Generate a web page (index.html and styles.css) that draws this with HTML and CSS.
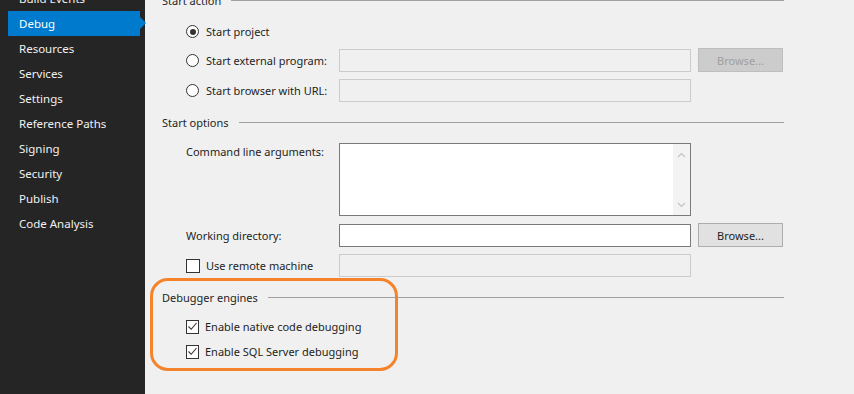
FILE: index.html
```html
<!DOCTYPE html>
<html lang="en">
<head>
    <meta charset="UTF-8">
    <title>Debug - Project Properties</title>
    <link rel="stylesheet" href="styles.css">
</head>
<body>
    <div class="window">
        <nav class="sidebar">
            <ul class="nav-list">
                <li>Build Events</li>
                <li class="active">Debug</li>
                <li>Resources</li>
                <li>Services</li>
                <li>Settings</li>
                <li>Reference Paths</li>
                <li>Signing</li>
                <li>Security</li>
                <li>Publish</li>
                <li>Code Analysis</li>
            </ul>
        </nav>

        <main class="page">
            <div class="group-header first"><span>Start action</span></div>

            <div class="row r-project">
                <label class="option"><span class="radio checked"></span>Start project</label>
            </div>
            <div class="row r-external">
                <label class="option"><span class="radio"></span>Start external program:</label>
                <input type="text" class="field" disabled>
                <button class="btn" disabled>Browse...</button>
            </div>
            <div class="row r-browser">
                <label class="option"><span class="radio"></span>Start browser with URL:</label>
                <input type="text" class="field" disabled>
            </div>

            <div class="group-header g-options"><span>Start options</span></div>

            <div class="row r-args">
                <label class="text-label">Command line arguments:</label>
                <div class="textarea">
                    <div class="scrollbar">
                        <svg width="9" height="6" viewBox="0 0 9 6"><polyline points="1,5 4.5,1.5 8,5" fill="none" stroke="#c4c4c4" stroke-width="1.2"/></svg>
                        <svg width="9" height="6" viewBox="0 0 9 6"><polyline points="1,1 4.5,4.5 8,1" fill="none" stroke="#c4c4c4" stroke-width="1.2"/></svg>
                    </div>
                </div>
            </div>
            <div class="row r-workdir">
                <label class="text-label">Working directory:</label>
                <input type="text" class="field enabled">
                <button class="btn">Browse...</button>
            </div>
            <div class="row r-remote">
                <label class="option"><span class="check"></span>Use remote machine</label>
                <input type="text" class="field" disabled>
            </div>

            <div class="group-header g-debugger"><span>Debugger engines</span></div>

            <div class="row r-native">
                <label class="option"><span class="check checked">
                    <svg width="11" height="11" viewBox="0 0 11 11"><polyline points="1.5,5.5 4.2,8.3 9.5,2" fill="none" stroke="#333" stroke-width="1.1"/></svg>
                </span>Enable native code debugging</label>
            </div>
            <div class="row r-sql">
                <label class="option"><span class="check checked">
                    <svg width="11" height="11" viewBox="0 0 11 11"><polyline points="1.5,5.5 4.2,8.3 9.5,2" fill="none" stroke="#333" stroke-width="1.1"/></svg>
                </span>Enable SQL Server debugging</label>
            </div>
        </main>

        <!-- annotation drawn over the screenshot -->
        <div class="highlight"></div>
    </div>
</body>
</html>
```

FILE: styles.css
```css
body {
    margin: 0;
    font-family: 'Noto Sans', 'Open Sans', sans-serif;
    font-size: 11px;
    color: #1e1e1e;
    background-color: #f0f0f0;
    overflow: hidden;
}

.window {
    position: relative;
    display: flex;
    width: 854px;
    height: 394px;
    overflow: hidden;
}

/* left navigation */
.sidebar {
    width: 145px;
    flex-shrink: 0;
    background-color: #252526;
}

.nav-list {
    list-style: none;
    margin: -14px 0 0 8px;
    padding: 0;
    width: 132px;
}

.nav-list li {
    position: relative;
    height: 25px;
    line-height: 25px;
    padding-left: 11px;
    color: #f1f1f1;
    font-size: 11.5px;
}

.nav-list li.active {
    background-color: #007acc;
    color: #ffffff;
}

.nav-list li.active::after {
    content: "";
    position: absolute;
    right: -6px;
    top: 6px;
    border-top: 6px solid transparent;
    border-bottom: 6px solid transparent;
    border-left: 6px solid #007acc;
}

/* main page */
.page {
    flex: 1;
    padding-left: 17px;
    display: flex;
    flex-direction: column;
}

.group-header {
    display: flex;
    align-items: center;
    height: 20px;
    width: 622px;
}

.group-header span {
    white-space: nowrap;
    margin-right: 10px;
}

.group-header::after {
    content: "";
    flex: 1;
    height: 1px;
    background-color: #a0a0a0;
}

.group-header.first { margin-top: -10px; }
.g-options { margin-top: 10px; }
.g-debugger { margin-top: 10px; }

.row {
    display: grid;
    grid-template-columns: 146px 352px 85px;
    column-gap: 7px;
    align-items: center;
    height: 23px;
    padding-left: 24px;
}

.r-project { margin-top: 10px; }
.r-external { margin-top: 5px; }
.r-browser { margin-top: 8px; }
.r-args { margin-top: 11px; height: 73px; align-items: start; }
.r-workdir { margin-top: 7px; }
.r-remote { margin-top: 8px; }
.r-native { margin-top: 8px; }
.r-sql { margin-top: 2px; }

.option {
    display: flex;
    align-items: center;
    white-space: nowrap;
}

.text-label {
    white-space: nowrap;
}

.r-args .text-label {
    padding-top: 1px;
}

.radio {
    width: 11px;
    height: 11px;
    border: 1px solid #333;
    border-radius: 50%;
    background-color: #ffffff;
    margin-right: 7px;
    display: flex;
    align-items: center;
    justify-content: center;
}

.radio.checked::before {
    content: "";
    width: 6px;
    height: 6px;
    border-radius: 50%;
    background-color: #333;
}

.check {
    width: 12px;
    height: 12px;
    border: 1px solid #333;
    background-color: #ffffff;
    margin-right: 6px;
    display: flex;
    align-items: center;
    justify-content: center;
}

.field {
    box-sizing: border-box;
    height: 23px;
    margin: 0;
    padding: 0 3px;
    border: 1px solid #cccccc;
    background-color: #f0f0f0;
    outline: none;
}

.field.enabled {
    border-color: #7a7a7a;
    background-color: #ffffff;
}

.textarea {
    box-sizing: border-box;
    height: 73px;
    border: 1px solid #7a7a7a;
    background-color: #ffffff;
    display: flex;
    justify-content: flex-end;
}

.scrollbar {
    width: 17px;
    background-color: #f3f3f3;
    display: flex;
    flex-direction: column;
    justify-content: space-between;
    align-items: center;
    padding: 8px 0 7px;
}

.btn {
    box-sizing: border-box;
    height: 24px;
    margin: 0;
    padding: 0;
    border: 1px solid #adadad;
    background-color: #e1e1e1;
    font-family: inherit;
    font-size: 11px;
    color: #1e1e1e;
}

.btn:disabled {
    background-color: #cccccc;
    border-color: #bfbfbf;
    color: #a0a0a0;
}

.highlight {
    position: absolute;
    left: 150px;
    top: 278px;
    width: 248px;
    height: 93px;
    box-sizing: border-box;
    border: 3px solid #f5832b;
    border-radius: 18px;
    pointer-events: none;
}
```
